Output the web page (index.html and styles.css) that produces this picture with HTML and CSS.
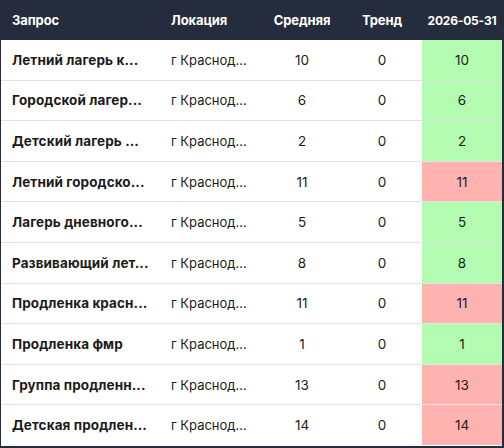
FILE: index.html
```html
<!DOCTYPE html>
<html lang="ru">
<head>
    <meta charset="UTF-8">
    <title>Позиции</title>
    <link rel="stylesheet" href="styles.css">
</head>
<body>
    <div class="wrap">
        <table class="report">
            <colgroup>
                <col class="c-q">
                <col class="c-loc">
                <col class="c-num">
                <col class="c-num">
                <col class="c-day">
            </colgroup>
            <thead>
                <tr>
                    <th class="q">Запрос</th>
                    <th class="loc">Локация</th>
                    <th class="num">Средняя</th>
                    <th class="num">Тренд</th>
                    <th class="day">2026-05-31</th>
                </tr>
            </thead>
            <tbody>
                <tr><td class="q">Летний лагерь к...</td><td class="loc">г Краснод...</td><td class="num">10</td><td class="num">0</td><td class="day good">10</td></tr>
                <tr><td class="q">Городской лагер...</td><td class="loc">г Краснод...</td><td class="num">6</td><td class="num">0</td><td class="day good">6</td></tr>
                <tr><td class="q">Детский лагерь ...</td><td class="loc">г Краснод...</td><td class="num">2</td><td class="num">0</td><td class="day good">2</td></tr>
                <tr><td class="q">Летний городско...</td><td class="loc">г Краснод...</td><td class="num">11</td><td class="num">0</td><td class="day bad">11</td></tr>
                <tr><td class="q">Лагерь дневного...</td><td class="loc">г Краснод...</td><td class="num">5</td><td class="num">0</td><td class="day good">5</td></tr>
                <tr><td class="q">Развивающий лет...</td><td class="loc">г Краснод...</td><td class="num">8</td><td class="num">0</td><td class="day good">8</td></tr>
                <tr><td class="q">Продленка красн...</td><td class="loc">г Краснод...</td><td class="num">11</td><td class="num">0</td><td class="day bad">11</td></tr>
                <tr><td class="q">Продленка фмр</td><td class="loc">г Краснод...</td><td class="num">1</td><td class="num">0</td><td class="day good">1</td></tr>
                <tr><td class="q">Группа продленн...</td><td class="loc">г Краснод...</td><td class="num">13</td><td class="num">0</td><td class="day bad">13</td></tr>
                <tr><td class="q">Детская продлен...</td><td class="loc">г Краснод...</td><td class="num">14</td><td class="num">0</td><td class="day bad">14</td></tr>
            </tbody>
        </table>
    </div>
</body>
</html>
```
FILE: styles.css
```css
body {
    margin: 0;
    font-family: Inter, "Noto Sans", sans-serif;
    background-color: #fff;
    color: #1b1b1b;
}

.wrap {
    width: 504px;
    height: 448px;
    box-sizing: border-box;
    border-left: 1px solid #242c3d;
    border-right: 2px solid #242c3d;
    border-bottom: 2px solid #242c3d;
    overflow: hidden;
}

.report {
    width: 501px;
    border-collapse: collapse;
    table-layout: fixed;
    font-size: 13px;
}

.c-q { width: 159px; }
.c-loc { width: 102px; }
.c-num { width: 80px; }
.c-day { width: 80px; }

.report thead tr {
    background-color: #242c3d;
    color: #fff;
}

.report th {
    height: 40px;
    padding: 0;
    font-weight: 700;
    font-size: 13px;
    letter-spacing: -0.1px;
    white-space: nowrap;
}

.report td {
    height: 39.6px;
    padding: 0;
    border-bottom: 1px solid #e2e2e2;
    white-space: nowrap;
}

.report tbody tr:last-child td {
    border-bottom: none;
}

.q {
    padding-left: 11px !important;
    text-align: left;
}

td.q {
    font-weight: 700;
    font-size: 13.5px;
    letter-spacing: 0.1px;
}

.loc {
    padding-left: 11px !important;
    text-align: left;
}

td.loc {
    font-size: 13px;
}

.num,
.day {
    text-align: center;
}

td.num,
td.day {
    font-size: 13.5px;
}

th.day {
    font-size: 12px;
    letter-spacing: -0.2px;
}

.good {
    background-color: #b3fbb0;
}

.bad {
    background-color: #ffb3b1;
}
```
